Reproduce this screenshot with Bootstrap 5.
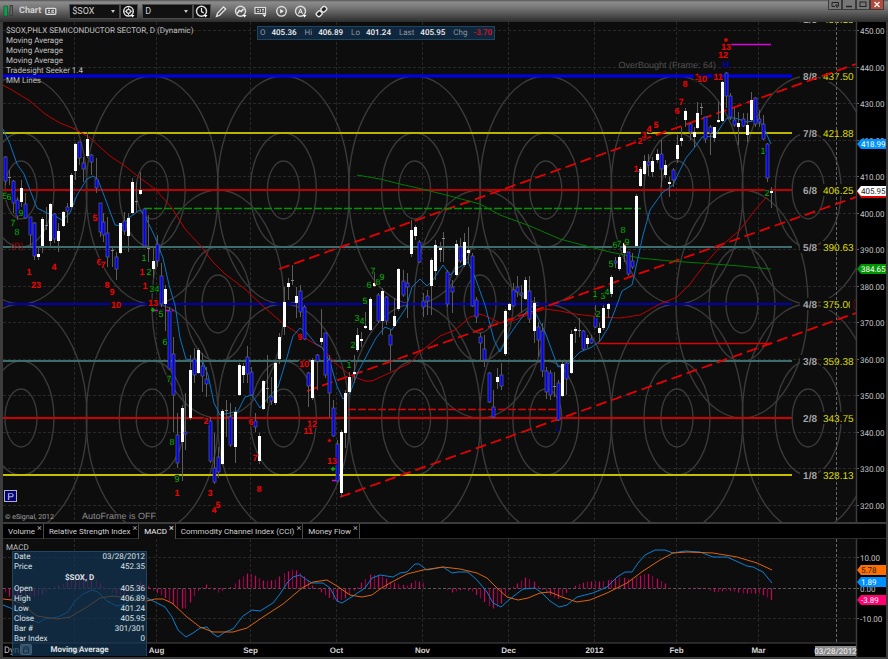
<!DOCTYPE html>
<html lang="en">
<head>
<meta charset="utf-8">
<meta name="viewport" content="width=device-width, initial-scale=1">
<title>Chart - $SOX, D</title>
<link href="https://cdn.jsdelivr.net/npm/bootstrap@5.3.0/dist/css/bootstrap.min.css" rel="stylesheet">
<style>
  :root { --ui: Roboto, "Liberation Sans", Arial, sans-serif; --edge: #3c3c3c; }
  body { background: #000; color: #b8b8b8; font: 8px/10px var(--ui); text-rendering: geometricPrecision; }
  svg { display: block; }
  svg text { font-family: var(--ui); }
  svg text.wide { font-family: "Liberation Sans", Arial, sans-serif; }
  svg text.halo { paint-order: stroke; stroke: #0d0d0d; stroke-width: 2px; }
  .win { border: solid var(--edge); border-width: 0 2px 2px 3px; background: #000; }
  .titlebar { height: 22px; margin: 0 -2px 0 -3px; padding-left: 3px; background: linear-gradient(#555 0, #8c8c8c 2px, #747474 8px, #2c2c2c 100%); }
  .titlebar h1 { font: bold 9px/12px var(--ui); color: #d0d0d0; }
  .tool { width: 20px; height: 15px; padding: 0; border: 0; background: none; color: #e4e4e4; display: flex; align-items: center; justify-content: center; }
  .tool.boxed { width: 18px; background: #111; border: 1px solid #4c4c4c; }
  .link-tool { width: 24px; justify-content: flex-start; }
  .symbol-select { height: 15px; border: 1px solid #4c4c4c; border-radius: 0; color: #d0d0d0; font: 9px/12px var(--ui); padding: 0 12px 0 2px; appearance: none; background: #111; }
  .pick { position: relative; width: 51px; }
  .pick::after { content: ""; position: absolute; right: 5px; top: 6px; border: 2px solid transparent; border-top: 3px solid #c8c8c8; pointer-events: none; }
  .win-btn { width: 14px; height: 10px; padding: 0; border: 1px solid #3a3a3a; border-top: 0; background: #777; color: #222; display: flex; align-items: center; justify-content: center; }
  .win-btn.close-win { background: #b04a3a; color: #e8e8e8; }
  .legend-list { position: absolute; left: 3px; top: 4px; line-height: 10px; color: #c0c0c0; }
  .quote { position: absolute; left: 254px; top: 4px; height: 14px; padding: 0 2px; background: #10263d; border: 1px solid #1c4560; line-height: 12px; color: #8c979f; }
  .quote dd { color: #f0f0f0; margin: 0 8px 0 6px; font-weight: 500; } .quote dt { font-weight: 400; }
  .quote dd.neg { color: #e0101c; margin-right: 0; }
  .tabstrip { height: 17px; border-top: 2px solid var(--edge); border-bottom: 1px solid #2e2e2e; background: #000; }
  .pane-tab { border-right: 1px solid #4a4a4a; height: 15px; padding: 0 1px 0 5px; gap: 2px; }
  .pane-tab button { border: 0; padding: 0; background: none; color: #d0d0d0; line-height: 13px; }
  .pane-tab .x { font-size: 9px; line-height: 8px; color: #aaa; align-self: flex-start; }
  .pane-tab.on { background: #0d0d0d; } .pane-tab.on button { color: #f0f0f0; }
  .info { position: absolute; left: 9px; top: 12px; width: 135px; padding: 0 1px; line-height: 10px; background: rgba(20, 52, 82, .72); border: 1px solid #1d4664; border-bottom: 0; color: #dde0e4; }
  .info td, .info th { padding: 0; font-weight: 400; height: 10px; }
  .info td { text-align: right; }
  .info .cap { text-align: center; font-weight: 700; height: 12px; }
</style>
<script src="https://cdn.jsdelivr.net/npm/bootstrap@5.3.0/dist/js/bootstrap.bundle.min.js"></script>
</head>
<body>
<div class="win d-flex flex-column">
  <header class="titlebar d-flex align-items-center">
    <svg width="12" height="14" viewBox="0 0 12 14"><rect x="1" y="2" width="3.500" height="10" fill="#12a050" stroke="#0a5028" stroke-width=".6"/><rect x="7" y="1.500" width="2.500" height="10" fill="#666" stroke="#2c2c2c" stroke-width=".7"/></svg>
    <h1 class="my-0 mx-1">Chart</h1>
    <button class="tool link-tool" aria-label="Link window"><svg width="12" height="9" viewBox="0 0 12 9"><rect x=".8" y="1.3" width="10" height="6" rx="1" fill="#555" stroke="#ddd" stroke-width="1.300"/><path d="M3 3.3h2M3 5.3h2M7 3v3M9 3.3H7.5M9 5.3H7.5" stroke="#eee"/></svg></button>
    <div class="pick"><select class="symbol-select w-100" aria-label="Symbol"><option>$SOX</option></select></div>
    <button class="tool boxed" aria-label="Symbol settings"><svg width="14" height="13" viewBox="0 0 14 13"><circle cx="6.5" cy="6.3" r="4.8" fill="none" stroke="#ddd" stroke-width="1.5"/><circle cx="6.5" cy="6.3" r="2" fill="none" stroke="#ddd" stroke-width="1.3"/><path d="M6.5 2.500v1.500M6.5 8.600v1.500M2.700 6.300h1.500M8.800 6.300h1.500" stroke="#ddd"/><path d="M8.500 10h4l-2 2.500z" fill="#fff"/></svg></button>
    <div class="pick ms-1"><select class="symbol-select w-100" aria-label="Interval"><option>D</option></select></div>
    <button class="tool boxed" aria-label="Time template"><svg width="14" height="13" viewBox="0 0 14 13"><circle cx="6.500" cy="6.300" r="5" fill="none" stroke="#ddd" stroke-width="1.500"/><path d="M6.500 3v3.600l2.200 1.500" fill="none" stroke="#eee" stroke-width="1.200"/><path d="M8.500 10h4l-2 2.500z" fill="#fff"/></svg></button>
    <button class="tool" aria-label="Draw"><svg width="13" height="13" viewBox="0 0 13 13"><path d="M1.500 11.500l1-3.200 6-6.300 2.200 2-6 6.300z" fill="#555" stroke="#e4e4e4" stroke-width="1.300"/></svg></button>
    <button class="tool" aria-label="Studies"><svg width="14" height="13" viewBox="0 0 14 13"><circle cx="6.500" cy="6.300" r="5" fill="none" stroke="#ddd" stroke-width="1.400"/><path d="M3.200 8.500l2.200-3 1.800 1 2.300-2.500" fill="none" stroke="#eee" stroke-width="1.400"/><path d="M8.500 10h4l-2 2.500z" fill="#fff"/></svg></button>
    <button class="tool" aria-label="Order entry"><svg width="14" height="13" viewBox="0 0 14 13"><rect x="1" y="2.500" width="10.500" height="6" fill="#444" stroke="#ddd" stroke-width="1.200"/><path d="M3 4.300h2.200M3 6.700h2.200M6.300 4v3M8 4.300h2M9 4.300v3" stroke="#eee" stroke-width=".9"/><path d="M8.500 9.500h4l-2 2.500z" fill="#fff"/></svg></button>
    <button class="tool" aria-label="Play back"><svg width="13" height="13" viewBox="0 0 13 13"><circle cx="6.500" cy="6.300" r="4.800" fill="none" stroke="#ddd" stroke-width="1.400"/><path d="M5.200 4l3.500 2.300-3.500 2.300z" fill="#eee"/></svg></button>
    <button class="tool" aria-label="Alerts"><svg width="14" height="13" viewBox="0 0 14 13"><circle cx="6.500" cy="6.300" r="5" fill="none" stroke="#ddd" stroke-width="1.400"/><path d="M4.500 8.800l2-5 2 5M5.200 7.200h2.600" fill="none" stroke="#eee"/><path d="M8.500 10h4l-2 2.500z" fill="#fff"/></svg></button>
    <button class="tool" aria-label="Link"><svg width="13" height="13" viewBox="0 0 13 13"><g transform="rotate(-45 6.500 6.500)" fill="#222" stroke="#e4e4e4" stroke-width="1.400"><rect x=".5" y="4.200" width="5.500" height="4.600" rx="1.500"/><rect x="7" y="4.200" width="5.500" height="4.600" rx="1.500"/></g></svg></button>
    <div class="ms-auto d-flex align-self-start me-1">
      <button class="win-btn" aria-label="Pop out"><svg width="9" height="7" viewBox="0 0 9 7"><path d="M4 5.500H1v-4h6.500v2M4.500 4h3.500l-1.700 2.500z" fill="none" stroke="#222"/></svg></button>
      <button class="win-btn" aria-label="Minimize"><svg width="8" height="7" viewBox="0 0 8 7"><path d="M1 5.500h6" stroke="#222" stroke-width="1.500"/></svg></button>
      <button class="win-btn" aria-label="Maximize"><svg width="8" height="7" viewBox="0 0 8 7"><rect x="1" y="1" width="6" height="4.500" fill="none" stroke="#222"/></svg></button>
      <button class="win-btn close-win" aria-label="Close"><svg width="8" height="7" viewBox="0 0 8 7"><path d="M1.500 1l5 5M6.500 1l-5 5" stroke="#eee" stroke-width="1.500"/></svg></button>
    </div>
  </header>

  <main class="position-relative">
    <svg id="price" class="w-100 h-auto" viewBox="3 22 883 500" role="img" aria-label="Daily price chart"></svg>
    <ul class="legend-list list-unstyled m-0">
      <li>$SOX,PHLX SEMICONDUCTOR SECTOR, D (Dynamic)</li>
      <li>Moving Average</li><li>Moving Average</li><li>Moving Average</li>
      <li>Tradesight Seeker 1.4</li><li>MM Lines</li>
    </ul>
    <dl class="quote d-flex m-0">
      <dt>O</dt><dd>405.36</dd><dt>Hi</dt><dd>406.89</dd><dt>Lo</dt><dd>401.24</dd><dt>Last</dt><dd>405.95</dd><dt>Chg</dt><dd class="neg">-3.70</dd>
    </dl>
  </main>

  <nav class="tabstrip d-flex" aria-label="Indicators">
    <div class="pane-tab d-flex"><button>Volume</button><button class="x" aria-label="Close Volume">×</button></div>
    <div class="pane-tab d-flex"><button>Relative Strength Index</button><button class="x" aria-label="Close Relative Strength Index">×</button></div>
    <div class="pane-tab d-flex on"><button>MACD</button><button class="x" aria-label="Close MACD">×</button></div>
    <div class="pane-tab d-flex"><button>Commodity Channel Index (CCI)</button><button class="x" aria-label="Close CCI">×</button></div>
    <div class="pane-tab d-flex"><button>Money Flow</button><button class="x" aria-label="Close Money Flow">×</button></div>
  </nav>

  <section class="position-relative">
    <svg id="macd" class="w-100 h-auto" viewBox="3 539 883 118" role="img" aria-label="MACD study"></svg>
    <div class="info">
      <table class="w-100">
        <tr><th scope="row">Date</th><td>03/28/2012</td></tr>
        <tr><th scope="row">Price</th><td>452.35</td></tr>
        <tr><td colspan="2" class="cap">$SOX, D</td></tr>
        <tr><th scope="row">Open</th><td>405.36</td></tr>
        <tr><th scope="row">High</th><td>406.89</td></tr>
        <tr><th scope="row">Low</th><td>401.24</td></tr>
        <tr><th scope="row">Close</th><td>405.95</td></tr>
        <tr><th scope="row">Bar #</th><td>301/301</td></tr>
        <tr><th scope="row">Bar Index</th><td>0</td></tr>
        <tr><td colspan="2" class="cap">Moving Average</td></tr>
      </table>
    </div>
  </section>
</div>

<script>
const NS = 'http://www.w3.org/2000/svg';
function add(parent, tag, attrs, text) {
  const e = document.createElementNS(NS, tag);
  for (const k in attrs) e.setAttribute(k, attrs[k]);
  if (text !== undefined) e.textContent = text;
  parent.appendChild(e);
  return e;
}
const line = (p, x1, y1, x2, y2, stroke, w = 1, dash = 'none') =>
  add(p, 'line', {x1, y1, x2, y2, stroke, 'stroke-width': w, 'stroke-dasharray': dash});
const label = (p, x, y, s, fill, size = 8, anchor = 'start', weight = 'normal', cls = '') =>
  add(p, 'text', {x, y, fill, 'font-size': size, 'text-anchor': anchor, 'font-weight': weight, class: cls}, s);
const curve = (p, points, stroke, w = 1) =>
  add(p, 'polyline', {points, fill: 'none', stroke, 'stroke-width': w, 'stroke-linejoin': 'round'});
function tag(p, y, s, fill, color, under) {
  if (under) add(p, 'path', {d: `M857 ${y + 1}l4 -5h25v11h-25z`, fill: under});
  add(p, 'path', {d: `M857 ${y}l4 -5h25v10h-25z`, fill});
  label(p, 861, y + 3, s, color);
}
const months = [[74, 'Jul'], [156, 'Aug'], [250, 'Sep'], [336, 'Oct'], [422, 'Nov'], [508, 'Dec'], [594, '2012'], [676, 'Feb'], [758, 'Mar']];

/* price pane */
const P = document.getElementById('price');
const yOf = v => 30 + (450 - v) * 3.653;
add(P, 'rect', {x: 3, y: 22, width: 853, height: 500, fill: '#0d0d0d'});
for (let v = 320; v <= 450; v += 10) {
  const y = Math.round(yOf(v)) + .5;
  line(P, 3, y, 856, y, '#282828', 1, '3 2');
  line(P, 856, y, 859, y, '#666');
  label(P, 860, y + 3, v.toFixed(2), '#c4c4c4');
}
for (const [x] of months) line(P, x + .5, 22, x + .5, 522, '#282828', 1, '3 2');

const plot = add(P, 'svg', {x: 3, y: 22, width: 853, height: 500, viewBox: '3 22 853 500'});
const rings = (cx, cy) => [[16, 29], [33, 57], [66, 114]].forEach(([rx, ry]) =>
  add(plot, 'ellipse', {cx, cy, rx, ry, fill: 'none', stroke: '#3a3a3a', 'stroke-width': 1.4}));
for (let i = 0; i < 7; i++) { rings(21 + i * 131.2, 190); rings(21 + i * 131.2, 418); }
[218, 480, 742].forEach(x => rings(x, 304));

[[76, '#0000f0', 3, '8/8', '437.50'], [133, '#b8b400', 2, '7/8', '421.88'], [190, '#c00000', 2, '6/8', '406.25'],
 [247, '#3c6c6c', 2, '5/8', '390.63'], [304, '#0000b4', 2, '4/8', '375.00'], [361, '#3c6c6c', 2, '3/8', '359.38'],
 [418, '#d00000', 2, '2/8', '343.75'], [475, '#c4c000', 2, '1/8', '328.13'], [19, '#000', 0, '+1/8', '453.13']]
.forEach(([y, c, w, f, v]) => {
  line(plot, 3, y, 792, y, c, w);
  add(plot, 'rect', {x: 800, y: y - 6, width: 18, height: 12, fill: '#0d0d0d'});
  add(plot, 'rect', {x: 821, y: y - 6, width: 34, height: 12, fill: '#0d0d0d'});
  label(plot, 817, y + 4, f, '#a4a4a4', 10, 'end', 'bold', 'wide');
  label(plot, 823, y + 4, v, '#dcdc00', 10, 'start', 'normal', 'wide');
});
add(plot, 'rect', {x: 850, y: 298, width: 5, height: 12, fill: '#0d0d0d'});
add(plot, 'path', {d: 'M856 300h-2v9h2', fill: 'none', stroke: '#700000', 'stroke-width': 1});

line(plot, 836.5, 22, 836.5, 522, '#666', 1, '3 2');
line(plot, 279, 269, 856, 64, '#e80000', 1.8, '11 5');
line(plot, 307, 391, 856, 197, '#e80000', 1.8, '11 5');
line(plot, 340, 497, 856, 313, '#e80000', 1.8, '11 5');
line(plot, 144, 208.5, 641, 208.5, '#009400', 1.3, '8 2');
line(plot, 348, 409.500, 559, 409.500, '#e00000', 1.3, '8 2');
line(plot, 598, 343.500, 772, 343.500, '#e00000', 1.500);
line(plot, 731, 44.500, 771, 44.500, '#e000e0', 1.500);
line(plot, 154, 310.500, 174, 310.500, '#e000e0', 1.500, '4 2');
line(plot, 332, 480.500, 338, 480.500, '#e000e0', 1.500);

curve(plot, '357,175 380,179 400,184 426,190 450,196 480,204 500,215 530,226 560,239 590,247 610,252 640,258 670,261 700,263 740,266 771,269', '#007c00');
curve(plot, '3,85 12,90 30,101 45,114 60,123 75,129 90,138 110,156 125,166 140,178 155,189 172,208 185,229 200,245 212,261 225,274 245,289 265,308 285,325 305,338 322,348 335,363 350,375 365,381 372,381 385,375 400,368 410,363 420,352 440,336 455,330 470,317 480,314 488,317 500,323 515,320 530,314 545,309 560,311 575,314 600,317 620,318 640,315 660,304 677,297 690,284 705,264 720,247 740,230 755,210 771,192', '#c00000');
curve(plot, '3,129 10,144 17,164 24,174 30,190 37,208 47,213 55,216 62,220 70,213 77,195 87,179 93,176 98,180 105,198 115,225 122,226 130,217 140,210 145,216 155,237 163,258 169,285 175,305 180,338 186,359 195,361 203,362 208,375 214,403 220,415 230,413 238,411 245,397 252,395 260,408 268,398 278,387 286,361 293,336 300,328 307,333 316,344 322,347 330,362 337,386 343,399 350,393 358,372 368,353 376,338 385,327 392,330 398,320 406,308 412,287 420,279 427,286 433,280 443,265 450,275 458,268 468,262 475,277 485,305 494,340 500,352 508,337 520,320 527,311 535,312 545,332 558,367 568,364 580,352 592,347 600,341 608,328 615,310 622,291 632,285 638,258 643,235 650,210 662,193 673,185 680,170 686,158 695,147 702,137 715,136 722,125 727,118 735,118 747,122 758,120 763,126 771,144', '#0a74c4');

/* candles: x, high, body top, body bottom, low, kind (u up, d down, n unchanged) */
const bars = `5 156 157 181 185 d|9 170 177 178 185 n|13 180 181 203 213 d|17 197 200 216 220 d|21 180 188 202 207 u|25 193 204 218 219 d|30 217 217 235 247 d|34 222 223 256 260 d|38 248 254 257 260 u|42 217 219 246 253 u|46 207 225 225 230 n|50 203 204 241 246 u|54 213 214 239 243 d|58 223 231 241 252 u|63 211 212 226 227 u|67 203 207 211 223 d|71 173 175 207 208 u|75 143 144 171 180 u|79 142 142 158 165 d|83 157 163 169 182 d|87 132 139 156 158 u|91 154 155 162 175 d|96 158 179 188 193 d|100 203 203 232 237 d|103 213 222 235 242 d|107 217 233 257 267 d|112 248 250 251 267 n|116 252 257 269 280 d|120 223 223 253 254 u|124 212 221 231 235 d|128 213 218 236 252 u|132 178 182 213 214 u|136 182 201 201 213 n|140 172 190 194 195 u|144 208 209 246 247 d|148 215 248 249 262 n|153 248 261 269 278 u|157 235 244 261 267 d|161 263 276 304 307 d|165 285 289 304 331 u|169 307 311 369 370 d|173 337 354 395 432 d|177 413 435 463 468 d|182 405 408 442 481 u|185 393 432 434 450 d|190 355 370 418 420 u|194 348 359 375 383 d|198 348 350 373 374 u|202 353 366 376 392 d|206 367 379 384 397 d|210 417 421 461 463 d|214 433 468 482 484 d|218 447 457 472 478 d|222 409 411 464 465 u|226 400 410 411 437 n|230 403 417 445 447 d|235 407 412 447 463 u|239 363 365 395 396 u|243 363 366 375 383 u|247 346 357 374 383 d|251 367 372 395 396 d|255 413 421 427 432 d|259 433 436 461 464 u|263 380 381 409 410 u|267 355 388 389 403 n|271 377 397 401 405 d|275 362 363 403 405 u|279 333 337 359 364 u|284 287 302 327 335 u|288 278 283 287 300 u|292 265 280 281 285 n|296 287 296 303 318 u|300 285 291 312 317 d|304 305 307 339 340 d|308 372 373 386 407 d|312 358 360 398 400 u|317 354 355 361 390 d|321 309 338 342 345 u|325 333 333 375 378 d|329 355 360 393 417 d|333 400 408 436 437 d|337 440 444 481 482 d|341 430 432 493 497 u|345 390 393 433 448 u|349 372 377 392 394 u|354 355 372 374 383 u|357 328 335 350 352 u|361 332 339 341 347 u|365 312 326 328 329 u|370 297 299 330 331 u|374 272 283 286 287 u|378 293 295 321 323 d|382 288 291 321 335 u|386 296 297 321 325 d|390 330 335 345 371 d|394 298 316 326 327 u|398 268 269 309 311 u|403 270 281 295 297 d|407 273 283 287 318 d|411 220 230 254 257 u|415 225 227 236 240 u|419 240 242 262 263 d|423 293 301 307 317 d|427 290 296 301 315 d|431 258 260 286 315 u|435 240 245 271 280 u|440 242 248 250 262 u|443 232 238 239 262 n|447 270 272 304 307 d|452 280 287 292 313 d|456 240 244 275 276 u|460 238 247 261 263 d|464 233 242 265 267 u|468 227 250 253 263 u|472 253 256 306 307 d|476 297 300 317 323 d|480 333 337 343 362 d|484 335 349 360 367 d|489 372 373 402 403 d|493 390 407 417 418 d|497 368 377 382 389 u|501 363 375 386 390 d|505 309 311 354 356 u|509 303 304 310 311 u|513 283 290 306 307 d|517 276 287 292 297 d|521 285 293 295 313 d|525 277 280 299 300 u|529 276 291 319 323 d|534 297 303 331 343 u|538 322 327 340 357 d|542 323 331 371 377 d|546 367 371 392 399 d|550 370 373 395 400 d|554 372 386 387 397 n|558 380 383 420 421 d|562 362 364 396 397 u|566 361 363 379 395 d|571 330 334 373 374 u|575 327 329 330 343 u|579 318 330 331 337 n|583 330 331 349 350 d|587 335 338 344 348 u|591 335 339 343 344 d|595 305 317 327 328 d|599 323 328 333 342 u|603 305 308 328 330 u|608 303 304 309 318 u|611 275 277 294 297 u|615 257 261 263 268 d|619 255 257 269 271 u|624 242 243 253 262 u|628 252 252 274 276 d|632 253 261 267 269 d|636 194 196 246 247 u|640 167 169 186 187 u|644 155 161 174 175 u|648 154 162 165 176 d|652 157 161 172 177 u|657 149 154 160 163 u|661 140 154 169 187 d|665 160 165 175 178 u|669 177 182 183 197 u|673 168 170 180 187 d|677 135 145 159 163 u|681 127 138 141 146 u|685 108 111 120 127 u|690 123 124 132 140 d|694 127 132 137 147 u|697 102 113 128 129 u|701 103 107 108 115 n|705 117 117 139 143 d|710 125 127 133 155 d|714 127 127 138 142 u|718 102 120 122 123 u|722 80 82 121 122 u|726 72 73 96 108 d|730 93 96 117 120 d|734 108 120 125 127 d|738 112 123 127 145 u|743 113 119 126 127 d|747 113 125 135 142 u|751 92 100 120 122 u|755 97 98 124 127 d|759 110 119 122 127 d|763 115 124 139 140 d|767 143 144 178 182 d|771 187 191 192 208 u`
  .split('|').map(s => s.split(' '));
for (const b of bars) {
  const [x, hi, top, bot, lo] = b.map(Number), kind = b[5];
  line(plot, x + .5, hi, x + .5, lo, '#5c5c5c');
  if (kind === 'd') add(plot, 'rect', {x: x - 1, y: top, width: 3, height: Math.max(2, bot - top), fill: '#0000f4', stroke: '#606080', 'stroke-width': .7});
  else if (kind === 'u') add(plot, 'rect', {x: x - 1, y: top, width: 3, height: Math.max(2, bot - top), fill: '#fff'});
  else add(plot, 'rect', {x: x - 1, y: top, width: 3, height: 1, fill: '#888'});
}

/* seeker counts: x centre, y centre, text */
const R = '#f40000', G = '#00b400';
[[R, '29 272 1|36 285 23|54 267 4|95 218 5|99 262 6|103 265 7|107 285 8|112 292 9|116 305 10|142 272 1|145 286 1|153 303 13|177 493 1|206 421 2|210 493 3|214 510 4|218 505 5|300 337 9|304 364 10|312 424 12|308 431 11|329 442 *|332 461 13|251 422 6|255 458 7|259 489 8|636 169 1|640 141 2|644 135 3|649 129 4|656 125 5|677 111 6|681 102 7|685 84 8|697 77 1|702 79 10|718 77 11|723 55 12|726 47 13'],
 [G, '5 196 5|9 197 6|21 213 9|13 223 7|17 232 8|144 258 1|149 272 2|152 289 3|157 289 4|161 314 5|165 342 6|169 379 7|172 442 8|177 479 9|349 365 1|353 345 2|357 318 3|362 321 4|365 301 5|369 285 6|373 271 7|378 282 8|382 277 9|595 294 1|603 296 3|607 292 4|598 314 2|611 264 5|615 245 6|619 244 7|623 230 8|627 242 9|763 151 1|767 193 2']]
.forEach(([c, list]) => list.split('|').forEach(s => {
  const [x, y, t] = s.split(' ');
  label(plot, x, +y + 3, t, c, 9, 'middle', c === R ? 'bold' : 'normal', 'wide halo');
}));
[[153, 310, G], [333, 469, G], [726, 40, R]].forEach(([x, y, c]) =>
  add(plot, 'path', {d: `M${x - 2} ${y}h4M${x} ${y - 2}v4`, stroke: c, 'stroke-width': 1.500}));
label(plot, 17, 249, '(R)', '#a00000', 9, 'middle', 'normal', 'wide');
label(plot, 558, 431, 'L', '#0000b0', 9, 'middle', 'normal', 'wide');
label(plot, 726, 68, 'H', '#0000b0', 10, 'middle', 'bold', 'wide');
label(plot, 716, 68, 'OverBought (Frame: 64)', '#505050', 9, 'end', 'normal', 'wide');
label(plot, 82, 519, 'AutoFrame is OFF', '#8c8c8c', 9, 'start', 'normal', 'wide halo');
label(plot, 5, 519, '© eSignal, 2012', '#a0a0a0', 7);
add(plot, 'rect', {x: 4.500, y: 490.500, width: 12, height: 11, fill: '#000080', stroke: '#b0b0b0'});
label(plot, 10.500, 500, 'P', '#d8d8d8', 10, 'middle', 'normal', 'wide');

line(P, 856.500, 22, 856.500, 522, '#3c3c3c', 1.500);
tag(P, 144, '418.99', '#0090ff', '#fff');
tag(P, 191, '405.95', '#fff', '#222', '#e00000');
tag(P, 269, '384.65', '#009400', '#fff');

/* MACD pane */
const M = document.getElementById('macd');
add(M, 'rect', {x: 3, y: 539, width: 853, height: 104, fill: '#0d0d0d'});
[[557.500, '10.00'], [588.500, '0.00'], [618.500, '-10.00']].forEach(([y, s]) => {
  line(M, 3, y, 856, y, s === '0.00' ? '#5a5a5a' : '#282828', 1, '3 2');
  line(M, 856, y, 859, y, '#666');
  label(M, 860, y + 3, s, '#c4c4c4');
});
for (const [x, t] of months) {
  line(M, x + .5, 539, x + .5, 643, '#282828', 1, '3 2');
  label(M, x + .5, 653, t, '#d4d4d4', 8, 'middle', 'bold', 'wide');
}
line(M, 836.500, 539, 836.500, 643, '#666', 1, '3 2');

const hist = [[5,-4],[9,-8],[33,-8],[43,-6],[48,-1],[51,1],[63,5],[71,9],[87,15],[95,10],[102,3],[110,-3],[117,-6],[123,-8],[129,-1],[132,3],[140,7],[148,2],[153,-2],[163,-8],[168,-12],[177,-20],[185,-20],[190,-14],[197,-3],[200,0],[206,4],[213,-1],[218,-4],[227,0],[233,3],[240,10],[247,15],[253,14],[263,8],[270,8],[275,9],[283,15],[292,19],[297,18],[304,12],[312,3],[320,-3],[328,-9],[337,-13],[345,-10],[353,-3],[362,7],[370,14],[378,13],[383,12],[390,7],[400,4],[407,3],[415,8],[423,6],[427,0],[443,0],[452,-4],[463,-1],[472,-3],[480,-10],[488,-17],[493,-20],[500,-17],[507,-3],[517,5],[525,11],[533,8],[540,0],[547,-5],[557,-11],[563,-7],[570,-1],[577,4],[587,7],[600,7],[613,9],[620,12],[630,9],[640,13],[647,15],[657,10],[665,5],[670,0],[700,1],[715,-4],[727,-2],[743,-5],[760,-5],[772,-12]];
bars.forEach((b, i) => {
  const x = +b[0], k = Math.max(1, hist.findIndex(h => h[0] >= x));
  const [a, c] = [hist[k - 1], hist[k]];
  const v = a[1] + (c[1] - a[1]) * (x - a[0]) / (c[0] - a[0]);
  line(M, x + .5, 588.500, x + .5, 588.500 - v, i % 2 ? '#d00060' : '#900044', 1.200);
});
curve(M, '3,605 13,609 20,613 30,618 38,623 45,619 58,617 68,612 75,601 83,594 92,590 98,592 107,601 117,606 125,604 133,598 140,594 147,598 157,603 165,607 172,617 178,630 186,637 193,633 200,628 207,627 212,633 218,637 225,632 233,629 243,616 252,610 260,611 273,603 280,594 287,583 293,577 300,575 307,580 312,583 323,583 330,588 337,601 342,603 353,596 365,588 372,578 380,575 393,577 400,573 407,572 415,564 419,564 427,570 443,567 452,573 458,572 468,572 477,580 487,592 493,603 501,607 510,599 523,589 535,588 542,593 550,601 559,607 567,605 577,597 593,593 607,587 617,577 625,572 632,572 638,563 645,555 655,550 665,550 673,553 685,551 700,552 713,557 727,557 747,566 753,567 763,572 772,583', '#0a80d4');
curve(M, '3,599 12,600 20,603 37,616 57,619 70,617 87,607 100,598 113,596 127,598 147,601 155,599 163,599 172,603 187,617 200,627 213,632 233,632 247,628 263,617 283,604 302,588 313,582 327,580 337,586 350,595 362,597 372,595 380,589 390,583 407,574 423,570 443,567 460,569 477,573 487,578 497,588 507,597 518,600 528,598 540,593 550,592 562,597 577,602 590,600 607,593 627,583 643,571 660,560 673,553 687,552 713,553 737,557 757,563 772,570', '#dc6408');
label(M, 6, 550, 'MACD', '#c0c0c0');
line(M, 3, 643, 857, 643, '#4a4a4a');
line(M, 856.500, 539, 856.500, 657, '#3c3c3c', 1.500);
label(M, 4, 653, 'Dyn', '#c0c0c0', 9);
add(M, 'rect', {x: 20.500, y: 644.500, width: 11, height: 10, rx: 1, fill: '#8ca0b4', stroke: '#b8c8d8'});
add(M, 'path', {d: 'M24 649v-2h4v2M23.500 649h5v4h-5z', fill: 'none', stroke: '#222'});
add(M, 'rect', {x: 815, y: 646, width: 41, height: 10, fill: '#8a8a8a'});
label(M, 835.500, 654, '03/28/2012', '#f4f4f4', 8, 'middle');
tag(M, 570, '5.78', '#ff6e00', '#222');
tag(M, 582, '1.89', '#0090ff', '#fff');
tag(M, 600, '-3.89', '#ff0070', '#fff');
</script>
</body>
</html>
